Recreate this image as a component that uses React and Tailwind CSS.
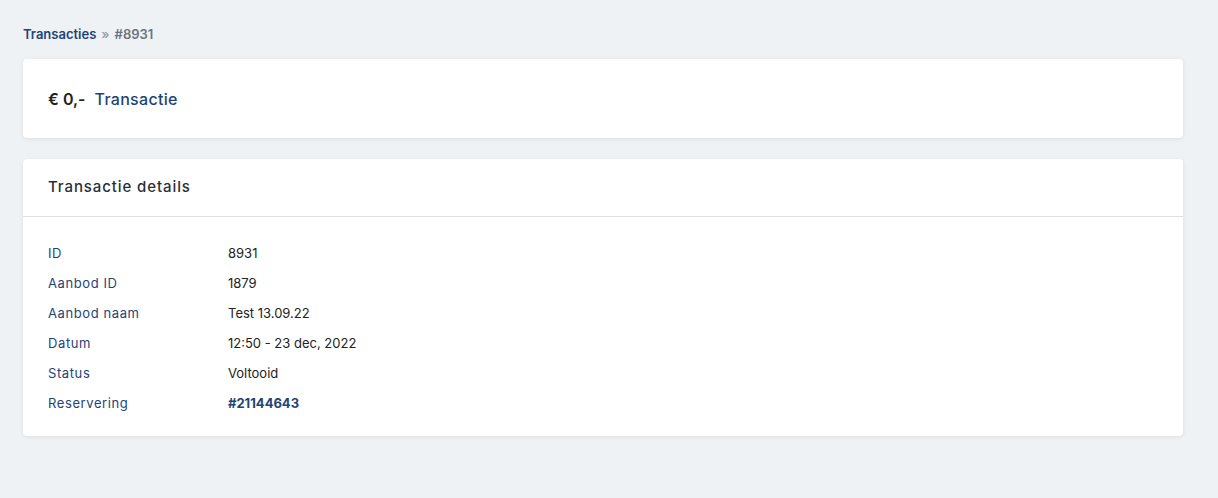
import React from 'react';

const rows = [
    { label: 'ID', value: '8931' },
    { label: 'Aanbod ID', value: '1879' },
    { label: 'Aanbod naam', value: 'Test 13.09.22' },
    { label: 'Datum', value: '12:50 - 23 dec, 2022' },
    { label: 'Status', value: 'Voltooid' },
    { label: 'Reservering', value: '#21144643', link: true },
];

const App = () => {
    return (
        <div className="min-h-[498px] bg-[#eff2f5] pl-[23px] pt-[25px] font-['Inter',sans-serif] text-[#222]">
            <div className="w-[1160px]">
                <div className="flex items-center gap-[5px] text-[13px] font-semibold leading-[18px]">
                    <span className="text-[#1e4477]">Transacties</span>
                    <span className="text-[#9aa3ad]">»</span>
                    <span className="text-[#6b7280]">#8931</span>
                </div>

                <div className="mt-[16px] flex h-[79px] items-center gap-[9px] rounded-[4px] bg-white px-[25px] shadow-[0_1px_4px_rgba(0,0,0,0.08)]">
                    <span className="text-[16px] font-semibold text-[#222]">€ 0,-</span>
                    <span className="text-[16px] font-medium tracking-[0.3px] text-[#1e4477]">Transactie</span>
                </div>

                <div className="mt-[21px] rounded-[4px] bg-white shadow-[0_1px_4px_rgba(0,0,0,0.08)]">
                    <div className="flex h-[58px] items-center border-b border-[#dcdfe3] px-[25px]">
                        <h2 className="text-[15px] font-medium tracking-[0.9px] text-[#2b2f36]">Transactie details</h2>
                    </div>
                    <div className="px-[25px] pt-[22px] pb-[17px]">
                        {rows.map((r) => (
                            <div key={r.label} className="flex h-[30px] items-center text-[13px]">
                                <span className="w-[180px] tracking-[0.6px] text-[#1e4477]">{r.label}</span>
                                <span className={r.link ? 'font-bold text-[#1e4477]' : 'text-[#222]'}>{r.value}</span>
                            </div>
                        ))}
                    </div>
                </div>
            </div>
        </div>
    );
};

export default App;
